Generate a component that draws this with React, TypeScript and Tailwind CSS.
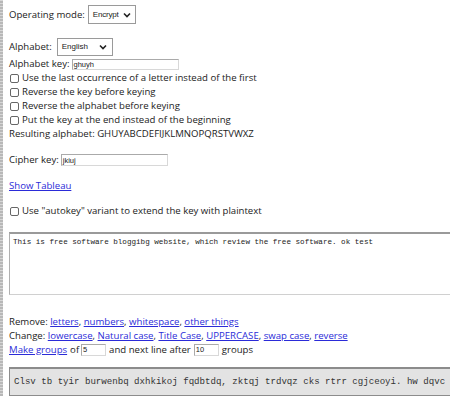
import React from "react";

const Chevron = () => (
  <svg width="8" height="6" viewBox="0 0 8 6" className="shrink-0">
    <path d="M1 1.5 L4 4.5 L7 1.5" fill="none" stroke="#222" strokeWidth="1.6" />
  </svg>
);

const Check = ({ label }: { label: string }) => (
  <div className="flex items-center h-[14px]">
    <span className="w-[9px] h-[9px] border border-[#666] rounded-[2px] bg-white mr-[3px] ml-[1px]" />
    <span>{label}</span>
  </div>
);

const A = ({ children }: { children: React.ReactNode }) => (
  <span className="text-[#2b2bd8] underline underline-offset-[1px]">{children}</span>
);

const Field = ({ w, h, v }: { w: string; h: string; v: string }) => (
  <div className={`${w} ${h} border border-[#d8d8d8] border-t-[#aaa] border-l-[#aaa] flex items-center pl-[1px] bg-white`}>
    <span className="text-[7.5px] leading-[9px]" style={{ fontFamily: '"Liberation Sans", sans-serif' }}>{v}</span>
  </div>
);

export default function App() {
  return (
    <div className="w-[450px] h-[396px] overflow-hidden bg-white flex">
      <div className="w-[3px] shrink-0 h-full bg-[repeating-linear-gradient(0deg,#b8b8b8_0px,#b8b8b8_2px,#d6d6d6_2px,#d6d6d6_3px)]" />
      <div
        className="pl-[6px] text-[9.6px] text-[#222] leading-[14px] flex flex-col w-[460px] shrink-0"
        style={{ fontFamily: '"Open Sans", "Noto Sans", sans-serif' }}
      >
        <div className="mt-[5px] h-[19px] flex items-center">
          <span>Operating mode:</span>
          <div className="ml-[3px] h-[19px] w-[48px] border border-[#9a9a9a] flex items-center justify-between pl-[4px] pr-[4px] bg-white">
            <span className="text-[8px] tracking-[-0.2px]" style={{ fontFamily: '"Liberation Sans", sans-serif' }}>Encrypt</span>
            <Chevron />
          </div>
        </div>

        <div className="mt-[14px] h-[18px] flex items-center">
          <span>Alphabet:</span>
          <div className="ml-[5px] h-[18px] w-[56px] border border-[#9a9a9a] flex items-center justify-between pl-[4px] pr-[5px] bg-white">
            <span className="text-[8px]" style={{ fontFamily: '"Liberation Sans", sans-serif' }}>English</span>
            <Chevron />
          </div>
        </div>

        <div className="mt-[1px] h-[14px] flex items-center">
          <span>Alphabet key:</span>
          <div className="ml-[2px]">
            <Field w="w-[107px]" h="h-[11px]" v="ghuyh" />
          </div>
        </div>

        <Check label="Use the last occurrence of a letter instead of the first" />
        <Check label="Reverse the key before keying" />
        <Check label="Reverse the alphabet before keying" />
        <Check label="Put the key at the end instead of the beginning" />
        <div className="h-[14px]">Resulting alphabet: GHUYABCDEFIJKLMNOPQRSTVWXZ</div>

        <div className="mt-[12px] h-[14px] flex items-center">
          <span>Cipher key:</span>
          <div className="ml-[2px]">
            <Field w="w-[107px]" h="h-[12px]" v="jkiuj" />
          </div>
        </div>

        <div className="mt-[12px] h-[14px]">
          <A>Show Tableau</A>
        </div>

        <div className="mt-[11px]">
          <Check label={'Use "autokey" variant to extend the key with plaintext'} />
        </div>

        <div className="mt-[14px] h-[64px] w-[460px] border border-[#e4e4e4] border-t-[2px] border-t-[#9a9a9a] border-l-[#b0b0b0] border-b-dotted border-b-[#d0d0d0] bg-white px-[3px] pt-[3px]">
          <div className="text-[7.6px] leading-[10px] text-[#222]" style={{ fontFamily: '"Liberation Mono", monospace' }}>
            This is free software bloggibg website, which review the free software. ok test
          </div>
        </div>

        <div className="mt-[20px] h-[14px] whitespace-nowrap">
          Remove: <A>letters</A>, <A>numbers</A>, <A>whitespace</A>, <A>other things</A>
        </div>
        <div className="h-[14px] whitespace-nowrap">
          Change: <A>lowercase</A>, <A>Natural case</A>, <A>Title Case</A>, <A>UPPERCASE</A>, <A>swap case</A>, <A>reverse</A>
        </div>
        <div className="h-[14px] flex items-center whitespace-nowrap">
          <A>Make groups</A>
          <span className="ml-[3px]">of</span>
          <div className="ml-[2px]">
            <Field w="w-[25px]" h="h-[12px]" v="5" />
          </div>
          <span className="ml-[3px]">and next line after</span>
          <div className="ml-[3px]">
            <Field w="w-[25px]" h="h-[12px]" v="10" />
          </div>
          <span className="ml-[3px]">groups</span>
        </div>

        <div className="mt-[10px] h-[30px] w-[460px] border border-[#8c8c8c] border-t-[2px] bg-[#e3e3e3] flex items-center pl-[4px] whitespace-nowrap overflow-hidden">
          <span className="text-[9.1px] text-[#333]" style={{ fontFamily: '"Liberation Mono", monospace' }}>
            Clsv tb tyir burwenbq dxhkikoj fqdbtdq, zktqj trdvqz cks rtrr cgjceoyi. hw dqvc
          </span>
        </div>
      </div>
    </div>
  );
}
